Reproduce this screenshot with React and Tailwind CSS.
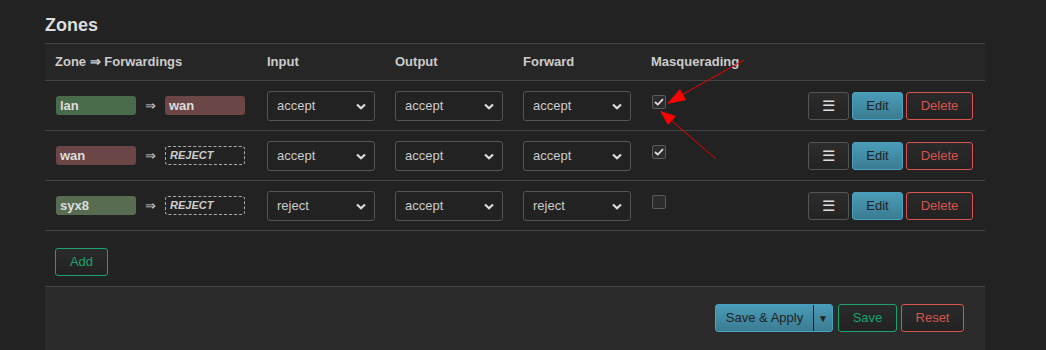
import React from 'react';

const rows = [
  { zone: 'lan', zoneColor: 'bg-[#4a6b4a]', fwd: 'wan', fwdColor: 'bg-[#6b4646]', input: 'accept', output: 'accept', forward: 'accept', masq: true },
  { zone: 'wan', zoneColor: 'bg-[#6b4646]', fwd: null, input: 'accept', output: 'accept', forward: 'accept', masq: true },
  { zone: 'syx8', zoneColor: 'bg-[#586c52]', fwd: null, input: 'reject', output: 'accept', forward: 'reject', masq: false },
];

function Select({ value }) {
  return (
    <div className="relative w-[108px] h-[30px] rounded-[3px] border border-[#555] bg-[#222] flex items-center pl-[9px] text-[13px] text-[#ccc]">
      {value}
      <svg className="absolute right-[8px] top-[11px]" width="10" height="7" viewBox="0 0 10 7">
        <path d="M1 1.5 L5 5.2 L9 1.5" fill="none" stroke="#ddd" strokeWidth="2.2" />
      </svg>
    </div>
  );
}

function Checkbox({ checked }) {
  return (
    <div className="w-[14px] h-[14px] rounded-[2px] border border-[#5a5a5a] bg-[#2c2c2c] flex items-center justify-center">
      {checked && (
        <svg width="10" height="8" viewBox="0 0 10 8">
          <path d="M1 4 L3.8 6.6 L9 1.2" fill="none" stroke="#e0e0e0" strokeWidth="1.8" />
        </svg>
      )}
    </div>
  );
}

function Badge({ label, color }) {
  return (
    <div className={`w-[80px] h-[19px] rounded-[3px] ${color} text-[#ddd] font-bold text-[13px] flex items-center pl-[4px] leading-none`}>
      {label}
    </div>
  );
}

function RejectBadge() {
  return (
    <div className="w-[80px] h-[19px] rounded-[3px] border border-dashed border-[#aaa] text-[#ccc] font-bold italic text-[11px] flex items-center pl-[4px] leading-none">
      REJECT
    </div>
  );
}

export default function App() {
  return (
    <div className="relative w-[1046px] h-[350px] bg-[#222] overflow-hidden" style={{ fontFamily: '"Liberation Sans", Arial, sans-serif' }}>
      <div className="pl-[45px] pr-[61px]">
        <h2 className="text-[18px] font-bold text-[#ddd] pt-[12px] h-[43px]">Zones</h2>

        {/* Header */}
        <div className="flex h-[38px] items-center bg-[#262626] border-y border-[#444] text-[13px] font-bold text-[#ccc]">
          <div className="w-[212px] pl-[10px]">Zone ⇒ Forwardings</div>
          <div className="w-[128px] pl-[10px]">Input</div>
          <div className="w-[128px] pl-[10px]">Output</div>
          <div className="w-[128px] pl-[10px]">Forward</div>
          <div className="w-[128px] pl-[10px]">Masquerading</div>
        </div>

        {rows.map((r, i) => (
          <div key={i} className="flex h-[50px] items-center border-b border-[#444]">
            <div className="w-[212px] pl-[11px] flex items-center">
              <Badge label={r.zone} color={r.zoneColor} />
              <span className="text-[#ccc] text-[13px] mx-[9px]">⇒</span>
              {r.fwd ? <Badge label={r.fwd} color={r.fwdColor} /> : <RejectBadge />}
            </div>
            <div className="w-[128px] pl-[10px]"><Select value={r.input} /></div>
            <div className="w-[128px] pl-[10px]"><Select value={r.output} /></div>
            <div className="w-[128px] pl-[10px]"><Select value={r.forward} /></div>
            <div className="w-[128px] pl-[11px] pb-[8px]"><Checkbox checked={r.masq} /></div>
            <div className="flex-1 flex justify-end gap-[3px] pr-[12px]">
              <button className="w-[41px] h-[28px] rounded-[3px] border border-[#555] bg-gradient-to-b from-[#2c2c2c] to-[#232323] text-[#ddd] text-[15px] leading-none">☰</button>
              <button className="w-[51px] h-[28px] rounded-[3px] border border-[#4aa0be] bg-gradient-to-b from-[#4a9cb8] to-[#3a7c92] text-[#222] text-[13px]">Edit</button>
              <button className="w-[67px] h-[28px] rounded-[3px] border border-[#d9534f] bg-gradient-to-b from-[#2a2a2a] to-[#222] text-[#d9534f] text-[13px]">Delete</button>
            </div>
          </div>
        ))}

        <div className="pt-[17px] pl-[10px] h-[55px]">
          <button className="w-[53px] h-[28px] rounded-[3px] border border-[#1aa36b] bg-gradient-to-b from-[#2a2a2a] to-[#222] text-[#1aa36b] text-[13px]">Add</button>
        </div>

        {/* Footer */}
        <div className="h-[64px] bg-[#2b2b2b] border-t border-[#444] flex justify-end items-start pt-[17px] pr-[21px]">
          <div className="flex h-[28px] rounded-[3px] border border-[#4aa0be] bg-gradient-to-b from-[#4a9cb8] to-[#3a7c92] text-[#222] text-[13px]">
            <div className="w-[97px] flex items-center justify-center">Save &amp; Apply</div>
            <div className="w-[19px] border-l border-[#1a1a1a] flex items-center justify-center text-[10px]">▼</div>
          </div>
          <button className="ml-[5px] w-[59px] h-[28px] rounded-[3px] border border-[#1aa36b] bg-gradient-to-b from-[#2a2a2a] to-[#222] text-[#1aa36b] text-[13px]">Save</button>
          <button className="ml-[4px] w-[63px] h-[28px] rounded-[3px] border border-[#d9534f] bg-gradient-to-b from-[#2a2a2a] to-[#222] text-[#d9534f] text-[13px]">Reset</button>
        </div>
      </div>

      {/* annotation arrows */}
      <svg className="absolute inset-0 pointer-events-none" width="1046" height="350">
        <line x1="744" y1="60" x2="680" y2="96" stroke="#e00" strokeWidth="1" />
        <polygon points="667,104 680,89 686,100" fill="#f00" />
        <line x1="716" y1="159" x2="672" y2="121" stroke="#e00" strokeWidth="1" />
        <polygon points="660,111 676,116 668,125" fill="#f00" />
      </svg>
    </div>
  );
}
